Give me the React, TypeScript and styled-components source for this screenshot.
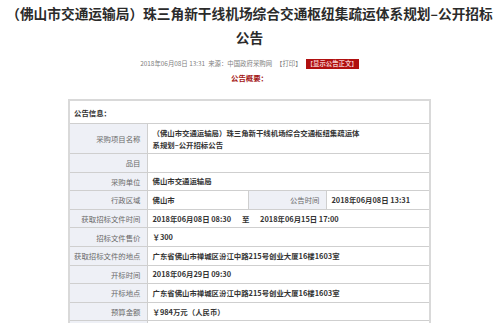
import React from "react";
import styled, { createGlobalStyle } from "styled-components";

const GlobalStyle = createGlobalStyle`
  html, body {
    margin: 0;
    padding: 0;
    background: #fff;
  }
  body {
    font-family: "Noto Sans CJK SC", "Noto Sans", sans-serif;
    color: #333;
    overflow: hidden;
  }
`;

const Page = styled.div`
  width: 499px;
  height: 323px;
  overflow: hidden;
`;

const Title = styled.h1`
  margin: 0;
  padding-top: 1px;
  font-size: 13.7px;
  line-height: 24px;
  font-weight: 700;
  color: #2b2b2b;
  text-align: center;
  white-space: nowrap;
`;

const Meta = styled.div`
  margin-top: 10px;
  display: flex;
  justify-content: center;
  align-items: center;
  gap: 3px;
  font-size: 6.4px;
  line-height: 10px;
  color: #808080;
  white-space: nowrap;
`;

const Tag = styled.span<{ $red?: boolean }>`
  padding: 0 1px;
  background: ${({ $red }) => ($red ? "#b01010" : "transparent")};
  color: ${({ $red }) => ($red ? "#f4c8c8" : "#808080")};
  font-weight: ${({ $red }) => ($red ? 700 : 400)};
`;

const Summary = styled.div`
  margin-top: 3px;
  text-align: center;
  font-size: 7.4px;
  line-height: 12px;
  font-weight: 700;
  color: #a31515;
`;

const Table = styled.table`
  margin: 15px auto 0;
  width: 361px;
  border-collapse: collapse;
  table-layout: fixed;
  border: 2px solid #d9d9d9;
  font-size: 7.4px;
`;

const HeadCell = styled.td`
  height: 22px;
  padding: 0 4px;
  border: 1px solid #cfcfcf;
  font-weight: 700;
  color: #333;
  background: #fff;
`;

const Label = styled.td`
  height: 17.6px;
  padding: 0 7px 0 4px;
  border: 1px solid #cfcfcf;
  background: #eef0f6;
  color: #6a6a6a;
  text-align: right;
  white-space: nowrap;
`;

const Value = styled.td<{ $tall?: boolean }>`
  height: ${({ $tall }) => ($tall ? "29px" : "17.6px")};
  padding: 0 4px;
  border: 1px solid #cfcfcf;
  font-weight: 700;
  color: #333;
  line-height: 12px;
  white-space: nowrap;
`;

const Gap = styled.span`
  display: inline-block;
  width: 29px;
  text-align: center;
`;

const rows: [string, React.ReactNode][] = [
  ["品目", ""],
  ["采购单位", "佛山市交通运输局"],
];

const rowsAfter: [string, React.ReactNode][] = [
  [
    "获取招标文件时间",
    <>
      2018年06月08日 08:30<Gap>至</Gap>2018年06月15日 17:00
    </>,
  ],
  ["招标文件售价", "￥300"],
  ["获取招标文件的地点", "广东省佛山市禅城区汾江中路215号创业大厦16楼1603室"],
  ["开标时间", "2018年06月29日 09:30"],
  ["开标地点", "广东省佛山市禅城区汾江中路215号创业大厦16楼1603室"],
  ["预算金额", "￥984万元（人民币）"],
  ["", ""],
];

export default function App() {
  return (
    <Page>
      <GlobalStyle />
      <Title>
        （佛山市交通运输局）珠三角新干线机场综合交通枢纽集疏运体系规划–公开招标
        <br />
        公告
      </Title>
      <Meta>
        <span>2018年06月08日 13:31</span>
        <span>来源：中国政府采购网</span>
        <Tag>【打印】</Tag>
        <Tag $red>【显示公告正文】</Tag>
      </Meta>
      <Summary>公告概要：</Summary>
      <Table>
        <colgroup>
          <col style={{ width: 79 }} />
          <col style={{ width: 101 }} />
          <col style={{ width: 78 }} />
          <col style={{ width: 103 }} />
        </colgroup>
        <tbody>
          <tr>
            <HeadCell colSpan={4}>公告信息：</HeadCell>
          </tr>
          <tr>
            <Label>采购项目名称</Label>
            <Value colSpan={3} $tall>
              （佛山市交通运输局）珠三角新干线机场综合交通枢纽集疏运体
              <br />
              系规划–公开招标公告
            </Value>
          </tr>
          {rows.map(([k, v]) => (
            <tr key={k}>
              <Label>{k}</Label>
              <Value colSpan={3}>{v}</Value>
            </tr>
          ))}
          <tr>
            <Label>行政区域</Label>
            <Value>佛山市</Value>
            <Label>公告时间</Label>
            <Value>2018年06月08日 13:31</Value>
          </tr>
          {rowsAfter.map(([k, v], i) => (
            <tr key={k || `blank-${i}`}>
              <Label>{k}</Label>
              <Value colSpan={3}>{v}</Value>
            </tr>
          ))}
        </tbody>
      </Table>
    </Page>
  );
}
